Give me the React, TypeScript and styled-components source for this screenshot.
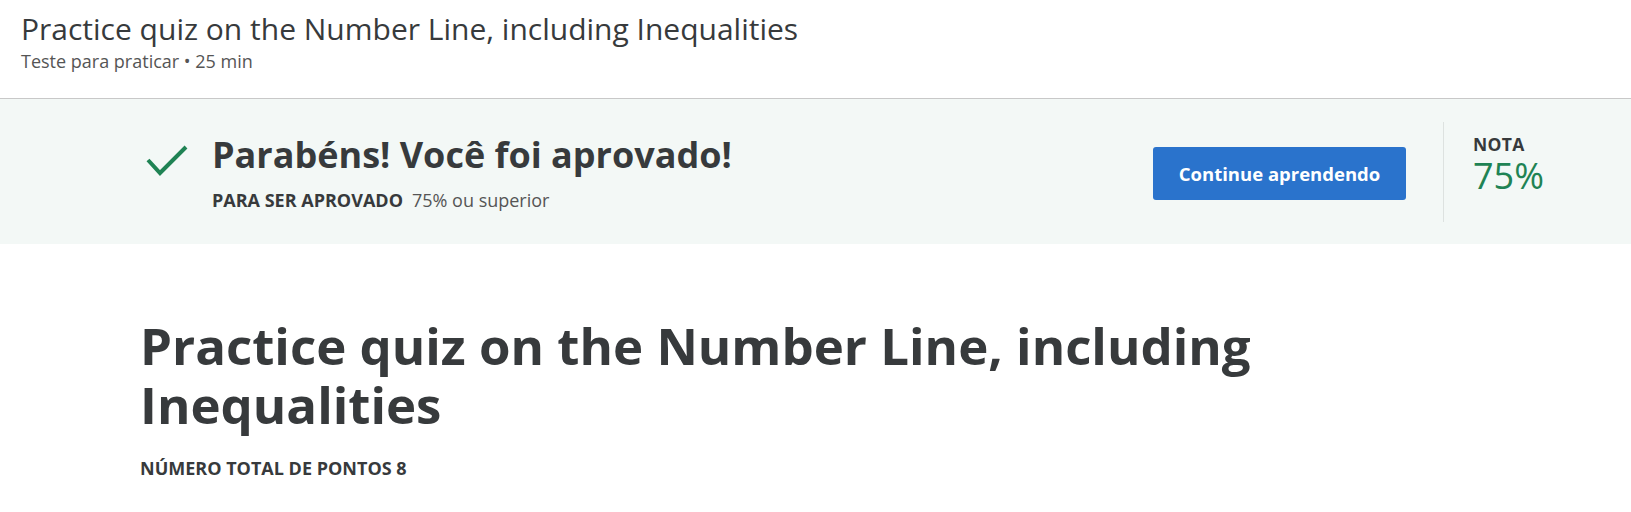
import styled, { createGlobalStyle } from "styled-components";

const GlobalStyle = createGlobalStyle`
  body {
    margin: 0;
    font-family: "Open Sans", "Liberation Sans", sans-serif;
    color: #373a3c;
    background: #fff;
  }
`;

const Header = styled.header`
  padding: 9px 21px 0;
  height: 99px;
  box-sizing: border-box;
  border-bottom: 1px solid #c8c8c8;
`;

const HeaderTitle = styled.h1`
  margin: 0;
  font-size: 30px;
  font-weight: 400;
  line-height: 40px;
  color: #373a3c;
`;

const HeaderMeta = styled.div`
  font-size: 18px;
  line-height: 24px;
  color: #555;
`;

const Banner = styled.section`
  background: #f3f8f6;
  height: 145px;
  display: flex;
  align-items: center;
  padding: 0 58px 0 146px;
`;

const Result = styled.div`
  flex: 1;
  display: flex;
  align-items: flex-start;
  gap: 24px;
`;

const CheckIcon = styled.svg`
  width: 42px;
  height: 31px;
  margin-top: 13px;
  flex-shrink: 0;
`;

const ResultText = styled.div`
  display: flex;
  flex-direction: column;
`;

const ResultTitle = styled.h2`
  margin: 0;
  font-size: 36px;
  font-weight: 700;
  line-height: 46px;
`;

const Requirement = styled.div`
  margin-top: 10px;
  font-size: 18px;
  color: #555;
`;

const Label = styled.span`
  font-weight: 700;
  font-size: 18px;
  color: #373a3c;
  margin-right: 9px;
`;

const Button = styled.button`
  width: 253px;
  height: 53px;
  margin-top: 4px;
  background: #2a73cc;
  color: #fff;
  border: none;
  border-radius: 3px;
  font-family: inherit;
  font-size: 18.5px;
  font-weight: 700;
  cursor: pointer;
`;

const Grade = styled.div`
  margin-left: 37px;
  border-left: 1px solid #dde2e0;
  height: 100px;
  padding: 11px 0 0 29px;
  box-sizing: border-box;
  display: flex;
  flex-direction: column;
  width: 130px;
`;

const GradeLabel = styled.div`
  font-size: 17.5px;
  font-weight: 700;
  letter-spacing: 0.3px;
  line-height: 22px;
`;

const GradeValue = styled.div`
  font-size: 36px;
  color: #1f8354;
  line-height: 42px;
`;

const Main = styled.main`
  padding: 72px 140px 0;
`;

const QuizTitle = styled.h1`
  margin: 0;
  max-width: 1150px;
  font-size: 51px;
  font-weight: 700;
  line-height: 59px;
`;

const Points = styled.div`
  margin-top: 22px;
  font-size: 18px;
  font-weight: 700;
`;

export default function App() {
  return (
    <>
      <GlobalStyle />
      <Header>
        <HeaderTitle>Practice quiz on the Number Line, including Inequalities</HeaderTitle>
        <HeaderMeta>Teste para praticar • 25 min</HeaderMeta>
      </Header>
      <Banner>
        <Result>
          <CheckIcon viewBox="0 0 42 31">
            <path d="M2 15 L14 28 L40 2" fill="none" stroke="#1f8354" strokeWidth="4" />
          </CheckIcon>
          <ResultText>
            <ResultTitle>Parabéns! Você foi aprovado!</ResultTitle>
            <Requirement>
              <Label>PARA SER APROVADO</Label>75% ou superior
            </Requirement>
          </ResultText>
        </Result>
        <Button>Continue aprendendo</Button>
        <Grade>
          <GradeLabel>NOTA</GradeLabel>
          <GradeValue>75%</GradeValue>
        </Grade>
      </Banner>
      <Main>
        <QuizTitle>Practice quiz on the Number Line, including Inequalities</QuizTitle>
        <Points>NÚMERO TOTAL DE PONTOS 8</Points>
      </Main>
    </>
  );
}
